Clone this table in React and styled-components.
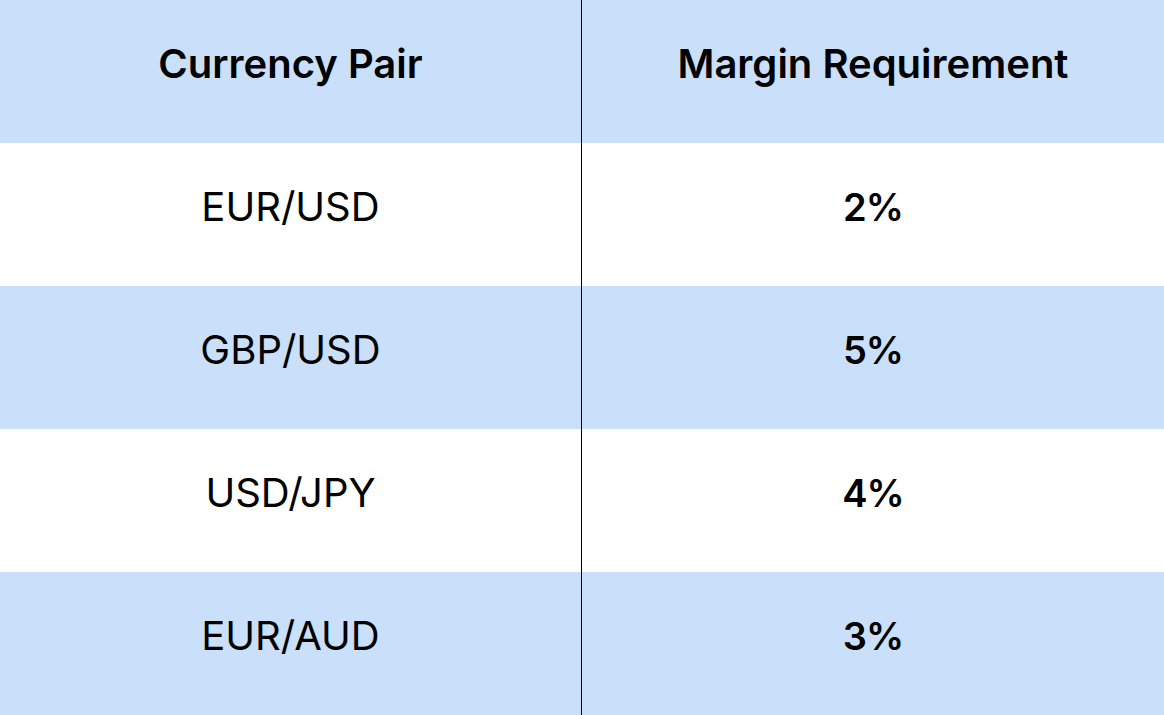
import React from 'react';
import styled, { createGlobalStyle } from 'styled-components';

const rows = [
  { pair: 'EUR/USD', margin: '2%' },
  { pair: 'GBP/USD', margin: '5%' },
  { pair: 'USD/JPY', margin: '4%' },
  { pair: 'EUR/AUD', margin: '3%' },
];

export default function App() {
  return (
    <>
      <GlobalStyle />
      <Table>
        <thead>
          <Row $shaded>
            <HeadCell>Currency Pair</HeadCell>
            <HeadCell>Margin Requirement</HeadCell>
          </Row>
        </thead>
        <tbody>
          {rows.map((r, i) => (
            <Row key={r.pair} $shaded={i % 2 === 1}>
              <Cell>{r.pair}</Cell>
              <Cell $bold>{r.margin}</Cell>
            </Row>
          ))}
        </tbody>
      </Table>
    </>
  );
}

const GlobalStyle = createGlobalStyle`
  body {
    margin: 0;
    background: #ffffff;
    font-family: Inter, "Noto Sans", sans-serif;
  }
`;

const Table = styled.table`
  width: 1164px;
  border-collapse: collapse;
  table-layout: fixed;
`;

const Row = styled.tr`
  height: 143px;
  background: ${(p) => (p.$shaded ? '#c9dffa' : '#ffffff')};
`;

const HeadCell = styled.th`
  padding: 0 0 16px;
  font-size: 40px;
  font-weight: 600;
  color: #000;
  text-align: center;
  vertical-align: middle;

  &:first-child {
    width: 581px;
    border-right: 1px solid #000;
  }
`;

const Cell = styled.td`
  padding: 0 0 16px;
  font-size: ${(p) => (p.$bold ? '38px' : '40px')};
  font-weight: ${(p) => (p.$bold ? 600 : 400)};
  letter-spacing: ${(p) => (p.$bold ? '-1px' : 'normal')};
  color: #000;
  text-align: center;
  vertical-align: middle;

  &:first-child {
    border-right: 1px solid #000;
  }
`;
